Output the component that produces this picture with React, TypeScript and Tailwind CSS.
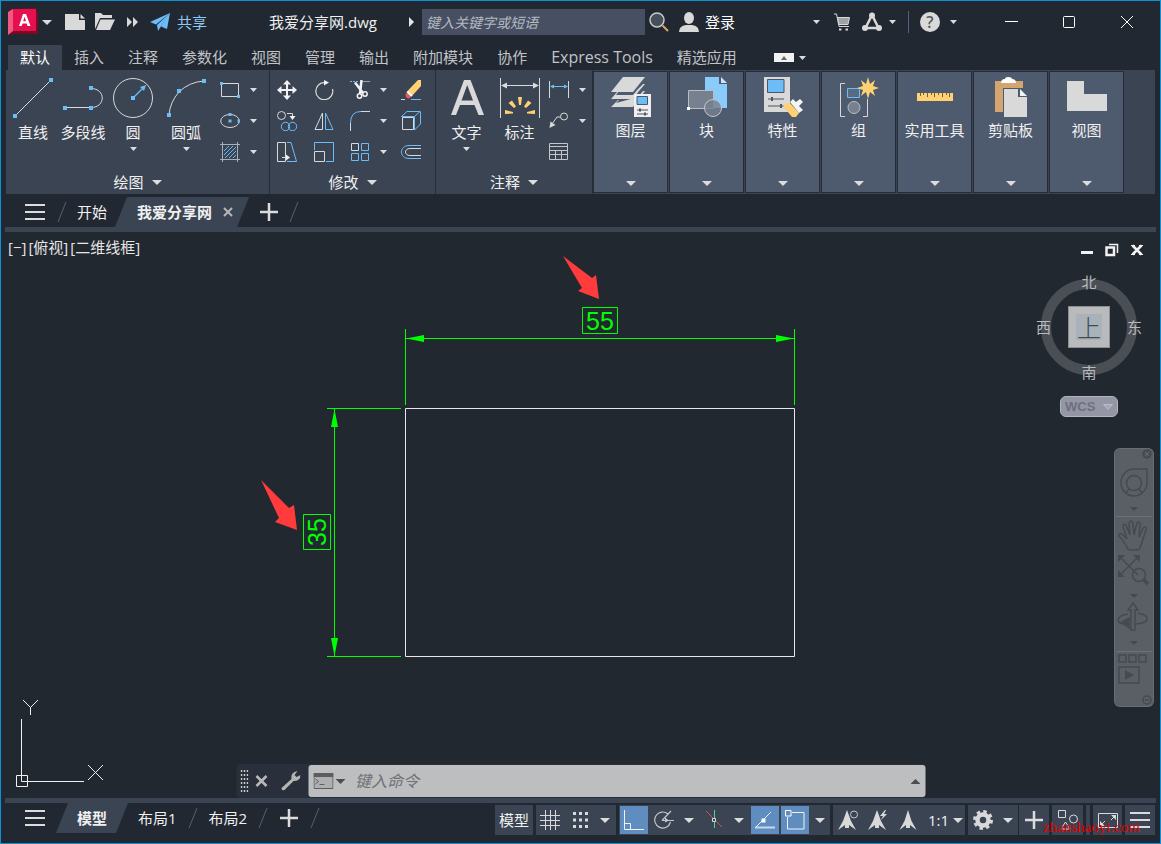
import { useState } from 'react';
import type { ReactNode } from 'react';
import clsx from 'clsx';

interface IconProps {
  children: ReactNode;
  size?: 'sm' | 'lg';
}

interface ToolProps {
  label: string;
  icon: ReactNode;
  caret?: boolean;
}

// Small icons are drawn on a 20px grid, large ones on a 40px grid
function Icon({ children, size = 'sm' }: IconProps) {
  return size === 'lg' ? (
    <svg viewBox="0 0 40 40" className="w-10 h-10 shrink-0" fill="none">{children}</svg>
  ) : (
    <svg viewBox="0 0 20 20" className="w-5 h-5 shrink-0" fill="none">{children}</svg>
  );
}

function Caret({ large = false }: { large?: boolean }) {
  return (
    <svg
      viewBox="0 0 10 5"
      preserveAspectRatio="none"
      className={clsx('shrink-0', large ? 'w-2.5 h-[5px]' : 'w-[7px] h-1')}
    >
      <path d="M0 0H10L5 5Z" fill="#dcdcdc" />
    </svg>
  );
}

function CaretButton({ label, large }: { label: string; large?: boolean }) {
  return (
    <button aria-label={label} className="shrink-0 flex items-center justify-center w-2.5 h-5">
      <Caret large={large} />
    </button>
  );
}

const W = '#d9d9d9';
const B = '#6cbcf7';
const Y = '#ffd173';

const drawTools = [
  {
    label: '直线',
    width: 'w-[50px]',
    icon: (
      <Icon size="lg">
        <path d="M2 38L38 2" stroke={W} />
        <path d="M0 36h4v4H0zM36 0h4v4h-4z" fill={B} />
      </Icon>
    ),
  },
  {
    label: '多段线',
    width: 'w-[50px]',
    icon: (
      <Icon size="lg">
        <path d="M2 29.500H28M28 10.500C43 10.500 43 29.500 28 29.500" stroke={W} />
        <path d="M0 28h4v4H0zM26 28h4v4h-4zM26 8h4v4h-4z" fill={B} />
      </Icon>
    ),
  },
  {
    label: '圆',
    width: 'w-[50px]',
    caret: true,
    icon: (
      <Icon size="lg">
        <circle cx="20" cy="20" r="19.5" stroke={W} />
        <path d="M20 20L31 9" stroke={B} strokeWidth="1.3" />
        <path d="M18 18h4v4h-4zM33 7L27 9L31 13Z" fill={B} />
      </Icon>
    ),
  },
  {
    label: '圆弧',
    width: 'w-14',
    caret: true,
    icon: (
      <Icon size="lg">
        <path d="M3 37Q4 24 13 14Q23 4 38 3" stroke={W} />
        <path d="M1 35h4v4H1zM11 11h4v4h-4zM36 1h4v4h-4z" fill={B} />
      </Icon>
    ),
  },
];

const drawSmall = [
  {
    label: '矩形',
    icon: (
      <Icon>
        <path d="M1.5 3.5H18.5V16.5H1.5Z" stroke={W} />
        <path d="M0 2h3v3H0zM17 15h3v3h-3z" fill={B} />
      </Icon>
    ),
  },
  {
    label: '椭圆',
    icon: (
      <Icon>
        <ellipse cx="10" cy="10" rx="9.3" ry="6.5" stroke={W} />
        <path d="M8.5 8.5h3v3h-3zM8.5 2h3v3h-3zM17.5 8.5h3v3h-3z" fill={B} />
      </Icon>
    ),
  },
  {
    label: '图案填充',
    icon: (
      <Icon>
        <path d="M0 2.500H20M0 17.500H20M2.500 0V20M17.500 0V20" stroke="#a9adb4" />
        <path d="M4 9L9 4M4 13L13 4M5 16L16 5M9 16L16 9M13 16L16 13" stroke={B} />
      </Icon>
    ),
  },
];

const modifyTools: ToolProps[] = [
  {
    label: '移动',
    icon: (
      <Icon>
        <path d="M10 2V18M2 10H18" stroke="#f2f2f2" strokeWidth="2" />
        <path d="M10 0L14 4.500H6ZM10 20L14 15.500H6ZM0 10L4.500 6V14ZM20 10L15.500 6V14Z" fill="#f2f2f2" />
      </Icon>
    ),
  },
  {
    label: '旋转',
    icon: (
      <Icon>
        <path d="M11 2.700A8.500 8.500 0 1 0 18.500 9" stroke={W} strokeWidth="1.200" />
        <path d="M10 0L15 2.500L10 5.500Z" fill="#f2f2f2" />
      </Icon>
    ),
  },
  {
    label: '修剪',
    caret: true,
    icon: (
      <Icon>
        <path d="M0 1.500H8" stroke={B} strokeDasharray="2 1" />
        <path d="M12 1.500H20" stroke="#9aa0a9" />
        <path d="M5 2.500L13 13M11.500 0L10 14" stroke="#f2f2f2" strokeWidth="2.500" />
        <circle cx="9.500" cy="16" r="2.200" stroke="#f2f2f2" strokeWidth="1.500" />
        <circle cx="15" cy="14" r="2.200" stroke="#f2f2f2" strokeWidth="1.500" />
      </Icon>
    ),
  },
  {
    label: '删除',
    icon: (
      <Icon>
        <path d="M20 0V6L11 16L6 11.500L17 0Z" fill={Y} />
        <path d="M7 11L11.500 15.500L10 17L5.500 12.500Z" fill="#fff" />
        <path d="M5.500 13L10 17L8 18.500Q4.500 18.500 4.500 14.500Z" fill="#f0575c" />
        <path d="M0 19.500H4" stroke={W} />
        <path d="M10 19.500H20" stroke={B} />
      </Icon>
    ),
  },
  {
    label: '复制',
    icon: (
      <Icon>
        <circle cx="4.500" cy="4.500" r="4" stroke={W} />
        <path d="M10 2.500H15.500V5" stroke={W} />
        <path d="M12.500 5H18.500L15.500 9Z" fill="#f2f2f2" />
        <circle cx="8.500" cy="15.500" r="4.200" stroke={B} />
        <circle cx="15.500" cy="15.500" r="4.200" stroke={B} />
      </Icon>
    ),
  },
  {
    label: '镜像',
    icon: (
      <Icon>
        <path d="M8.500 2V18.500H1Z" stroke={W} />
        <path d="M11.500 2V18.500H19Z" stroke={B} />
      </Icon>
    ),
  },
  {
    label: '圆角',
    caret: true,
    icon: (
      <Icon>
        <path d="M.5 12Q.5 .5 11 .5" stroke={B} />
        <path d="M.5 12V20M11 .5H20" stroke={W} />
      </Icon>
    ),
  },
  {
    label: '分解',
    icon: (
      <Icon>
        <path d="M.5 5.500L6 .5H19L13.500 5.500ZM19.500 .5V13L13.500 19V5.500" stroke={B} />
        <path d="M1.500 6.500H12.500V18.500H1.500Z" stroke={W} />
      </Icon>
    ),
  },
  {
    label: '拉伸',
    icon: (
      <Icon>
        <path d="M10 .5H14L19.500 19.500H10" stroke={B} />
        <path d="M8.500 .5H.5V19.500H8.500ZM5 15.500H10" stroke={W} />
        <path d="M9 12.500L13 15.500L9 18.500Z" fill="#f2f2f2" />
      </Icon>
    ),
  },
  {
    label: '缩放',
    icon: (
      <Icon>
        <path d="M.5 8V.5H19.500V19.500H12" stroke={B} />
        <path d="M.5 9.500H10.500V19.500H.5Z" stroke={W} />
      </Icon>
    ),
  },
  {
    label: '阵列',
    caret: true,
    icon: (
      <Icon>
        <path d="M1.500 1.500H8.500V8.500H1.500Z" stroke={W} />
        <path d="M11.500 1.500H18.500V8.500H11.500ZM1.500 11.500H8.500V18.500H1.500ZM11.500 11.500H18.500V18.500H11.500Z" stroke={B} />
      </Icon>
    ),
  },
  {
    label: '偏移',
    icon: (
      <Icon>
        <path d="M20 3.500H8C-2 3.500 -2 16.500 8 16.500H20" stroke={B} />
        <path d="M20 6.500H9C3 6.500 3 13.500 9 13.500H20" stroke={W} />
      </Icon>
    ),
  },
];

const annotateSmall: ToolProps[] = [
  {
    label: '线性',
    caret: true,
    icon: (
      <Icon>
        <path d="M.5 1V18M19.500 1V18" stroke={W} />
        <path d="M2 6.500H18" stroke={B} />
        <path d="M1 6.500L5 4.500V8.500ZM19 6.500L15 4.500V8.500Z" fill={B} />
      </Icon>
    ),
  },
  {
    label: '引线',
    caret: true,
    icon: (
      <Icon>
        <circle cx="15" cy="5.500" r="3.500" stroke={W} />
        <path d="M11.500 6H8L3 13" stroke={W} />
        <path d="M.5 17L1.500 10.500L6.500 14Z" fill={W} />
      </Icon>
    ),
  },
  {
    label: '表格',
    icon: (
      <Icon>
        <path d="M.5 1.500H18.500V17.500H.5ZM.5 4.500H18.500M.5 8.500H18.500M.5 12.500H18.500M6.500 8.500V17.500M12.500 8.500V17.500" stroke="#c4c6ca" />
      </Icon>
    ),
  },
];

const tilePanels = [
  {
    label: '图层',
    icon: (
      <Icon size="lg">
        <path d="M12 0H34L22 15H0Z" fill={W} />
        <path d="M27 12L32 7H34L28 14L22 22H0L7 14H8L5 18H22ZM27 20L32 14H34L28 22L22 30H0L7 23H8L5 26" fill={W} />
        <path d="M23 17H40V40H23Z" fill="#efefef" />
        <path d="M26 19.500H36.500V27.500H26Z" fill={B} stroke="#4c5766" />
        <path d="M26 33H37M26 37H37" stroke="#4c5766" />
        <path d="M29 31.500V34.500M34 35.500V38.500" stroke="#4c5766" strokeWidth="2" />
      </Icon>
    ),
  },
  {
    label: '块',
    icon: (
      <Icon size="lg">
        <path d="M18 0H32V7H40V31H18Z" fill="#89cbfb" />
        <path d="M34 0L40 6H34Z" fill="#c7e6fd" />
        <path d="M1.500 13.500H26.500V31.500H1.500Z" fill="#76808f" stroke="#b9bdc4" />
        <circle cx="26" cy="31" r="8.500" fill="#76808f" fillOpacity=".8" stroke="#c5c8cd" />
        <path d="M0 30h3v3H0z" fill="#fff" />
      </Icon>
    ),
  },
  {
    label: '特性',
    icon: (
      <Icon size="lg">
        <path d="M1 0H27V35H1Z" fill={W} />
        <path d="M4.500 2.500H21V15.500H4.500Z" fill={B} stroke="#4c5766" />
        <path d="M5 22H21M5 29H21" stroke="#4c5766" />
        <path d="M9 20V24M18 27V31" stroke="#4c5766" strokeWidth="2" />
        <path d="M20 29L26 25L36 36L33 40H29Z" fill={Y} />
        <path d="M27 25L30 22L33 25L37 22L40 25L36 29L40 33L36 36Z" fill="#f4f4f4" />
      </Icon>
    ),
  },
  {
    label: '组',
    icon: (
      <Icon size="lg">
        <path d="M6 6.500H1.500V39.500H6M24 39.500H28.500V22" stroke={W} />
        <path d="M8.500 11.500H20.500V20.500H8.500Z" stroke={B} fill="#576b82" />
        <circle cx="15" cy="30.500" r="6" stroke="#b9bdc4" fill="#76808f" />
        <path d="M29 0L31 7L36 3L34 9L40 11L34 13L36 19L31 15L29 22L27 15L22 19L24 13L18 11L24 9L22 3L27 7Z" fill={Y} />
      </Icon>
    ),
  },
  {
    label: '实用工具',
    icon: (
      <Icon size="lg">
        <path d="M2 16H38V24H2Z" fill={Y} />
        <path d="M5.500 16V19M8.500 16V18M12.500 16V20M16.500 16V18M19.500 16V20M23.500 16V18M27.500 16V20M31.500 16V18M34.500 16V20" stroke="#6b604a" />
      </Icon>
    ),
  },
  {
    label: '剪贴板',
    icon: (
      <Icon size="lg">
        <path d="M4 4H32V11H12V35H4Z" fill="#d3a66f" />
        <path d="M10 6Q10 2 14 2Q14 0 17 0Q21 0 21 2Q25 2 25 6Z" fill="#fff" />
        <path d="M13 12H27V20H36V40H13Z" fill={W} />
        <path d="M29 12L36 19H29Z" fill="#f2f2f2" />
      </Icon>
    ),
  },
  {
    label: '视图',
    icon: (
      <Icon size="lg">
        <path d="M0 4H17V17H40V34H0Z" fill={W} />
      </Icon>
    ),
  },
];

const ribbonTabs = ['默认', '插入', '注释', '参数化', '视图', '管理', '输出', '附加模块', '协作', 'Express Tools', '精选应用'];

function BigTool({ label, icon, caret, width }: ToolProps & { width: string }) {
  return (
    <button className={clsx('shrink-0 flex flex-col items-center', width)}>
      {icon}
      <span className="mt-1 leading-5 whitespace-nowrap">{label}</span>
      {caret && <span className="mt-[5px]"><Caret /></span>}
    </button>
  );
}

function SmallTool({ label, icon, caret }: ToolProps) {
  return (
    <div className="flex items-center gap-2">
      <button aria-label={label}>{icon}</button>
      {caret && <CaretButton label={`${label}选项`} />}
    </div>
  );
}

function Panel({ title, width, children }: { title: string; width: string; children: ReactNode }) {
  return (
    <section className={clsx('shrink-0 flex flex-col border-r border-[#272d38]', width)}>
      <div className="flex-1 flex pt-2">{children}</div>
      <button className="flex items-center justify-center gap-2 h-6 leading-5">
        {title}
        <Caret large />
      </button>
    </section>
  );
}

function Ribbon() {
  return (
    <div className="flex h-[124px] mx-[5px] bg-[#3b4453] overflow-hidden">
      <Panel title="绘图" width="w-[264px]">
        <div className="flex pl-0.5">
          {drawTools.map((tool) => <BigTool key={tool.label} {...tool} />)}
        </div>
        <div className="flex flex-col gap-[11px] pl-1.5 pt-0.5">
          {drawSmall.map((tool) => <SmallTool key={tool.label} {...tool} caret />)}
        </div>
      </Panel>

      <Panel title="修改" width="w-[166px]">
        <div className="grid grid-cols-[37px_36px_51px_20px] auto-rows-[20px] gap-y-[11px] pl-[7px] pt-0.5">
          {modifyTools.map((tool) => <SmallTool key={tool.label} {...tool} />)}
        </div>
      </Panel>

      <Panel title="注释" width="w-[157px]">
        <div className="flex pl-1">
          <BigTool
            label="文字"
            width="w-[53px]"
            caret
            icon={<Icon size="lg"><path d="M4 37L17 2H23.500L37 37H31.500L27.500 27H13L9 37ZM14.500 22.500H26L20.200 7Z" fill={W} fillRule="evenodd" /></Icon>}
          />
          <BigTool
            label="标注"
            width="w-[53px]"
            icon={
              <Icon size="lg">
                <path d="M.5 0V40M39.500 0V40M2 7.500H38" stroke={W} />
                <path d="M1 7.500L7 4.500V10.500ZM39 7.500L33 4.500V10.500Z" fill={W} />
                <path d="M18 19H22L21 27H19ZM8.500 25L12 22.500L16 28.500L14 30ZM31.500 25L28 22.500L24 28.500L26 30ZM5 32L13 34V35.500L5 36ZM35 32L27 34V35.500L35 36Z" fill={Y} />
              </Icon>
            }
          />
        </div>
        <div className="flex flex-col gap-[11px] pl-[3px] pt-0.5">
          {annotateSmall.map((tool) => <SmallTool key={tool.label} {...tool} />)}
        </div>
      </Panel>

      {/* Collapsed panels */}
      <div className="flex gap-px py-px">
        {tilePanels.map((panel) => (
          <button
            key={panel.label}
            className="shrink-0 flex flex-col items-center w-[75px] pt-[5px] pb-1.5 bg-[#4e5a6d] border border-[#272d38]"
          >
            {panel.icon}
            <span className="mt-[3px] leading-5">{panel.label}</span>
            <span className="mt-auto"><Caret large /></span>
          </button>
        ))}
      </div>
    </div>
  );
}

function TitleBar() {
  return (
    <header className="flex items-center h-11 pl-[7px] pr-1 pb-0.5">
      <button aria-label="应用程序菜单" className="shrink-0">
        <svg viewBox="0 0 30 28" className="w-[30px] h-7">
          <path d="M4 1L28 0L30 6V26H4L0 27V4Z" fill="#7d0a25" />
          <path d="M0 4L5 1V23L0 27Z" fill="#ee5a80" />
          <path d="M5 1H28V23H5Z" fill="#e51050" />
          <path d="M11 18L15 6H18L22.500 18H19.500L18.700 15.500H14.500L13.700 18ZM15.200 13.200H18L16.600 8.800Z" fill="#fff" fillRule="evenodd" />
        </svg>
      </button>
      <span className="ml-1"><CaretButton label="菜单选项" large /></span>
      <button aria-label="新建" className="ml-[13px]">
        <Icon><path d="M0 2H14V8H20V18H0ZM15.500 2L20 6.500H15.500Z" fill={W} /></Icon>
      </button>
      <button aria-label="打开" className="ml-2.5">
        <Icon>
          <path d="M0 17V1H6L8 3H17V6H5L1 15Z" fill={W} />
          <path d="M5.500 7.500H20L15 18H1Z" fill={W} />
        </Icon>
      </button>
      <button aria-label="更多" className="ml-3">
        <svg viewBox="0 0 11 10" className="w-[11px] h-2.5"><path d="M0 0L5 5L0 10ZM6 0L11 5L6 10Z" fill={W} /></svg>
      </button>
      <button className="shrink-0 flex items-center gap-[7px] ml-3 text-[#8cc8f5]">
        <Icon>
          <path d="M20 1L0 10L6 12.500ZM20 1L7 13L8 19L10.500 15ZM20 1L11 14.500L17 17Z" fill={B} />
        </Icon>
        共享
      </button>
      <h1 className="ml-[62px] whitespace-nowrap text-[#f0f0f0]">我爱分享网.dwg</h1>
      <svg viewBox="0 0 5 10" className="w-[5px] h-2.5 ml-8 shrink-0"><path d="M0 0L5 5L0 10Z" fill="#e6e6e6" /></svg>
      <input
        aria-label="搜索"
        placeholder="键入关键字或短语"
        className="w-[223px] h-[26px] ml-2 px-1 bg-[#475062] italic text-sm text-[#e0e0e0] placeholder:text-[#b4b9c1] outline-none"
      />
      <button aria-label="查找" className="ml-1">
        <Icon>
          <circle cx="8" cy="8" r="7" fill="#46505c" stroke="#c9c9c9" strokeWidth="1.500" />
          <path d="M13.500 13.500L19 19" stroke="#d7a76b" strokeWidth="2" />
        </Icon>
      </button>
      <button className="shrink-0 flex items-center gap-1.5 ml-2.5 text-white">
        <Icon>
          <ellipse cx="10" cy="6" rx="5" ry="6" fill={W} />
          <path d="M0 20Q0 14 7 13H13Q20 14 20 20Z" fill={W} />
        </Icon>
        登录
      </button>

      <div className="ml-auto flex items-center">
        <CaretButton label="登录选项" />
        <button aria-label="应用商店" className="ml-3">
          <Icon>
            <path d="M1 2H3.500L6 14.500H16" stroke={W} />
            <path d="M4.500 5.500H16.500L15 12.500H6Z" fill="#a0a2a5" stroke={W} />
            <path d="M6 16.500h2.500v2H6zM12.500 16.500H15v2h-2.500z" fill={W} />
          </Icon>
        </button>
        <button aria-label="保持连接" className="ml-[9px]">
          <Icon>
            <path d="M10 3L3.500 16H16.500Z" stroke={W} strokeWidth="2.500" />
            <circle cx="10" cy="3.500" r="3" fill={W} />
            <circle cx="3" cy="16" r="3" fill={W} />
            <circle cx="17" cy="16" r="3" fill={W} />
          </Icon>
        </button>
        <span className="ml-[5px]"><CaretButton label="连接选项" /></span>
        <span className="w-px h-[22px] mx-[11px] bg-[#566078]" />
        <button aria-label="帮助" className="flex items-center justify-center w-5 h-5 rounded-full bg-[#d9d9d9] text-base font-semibold text-[#555a60]">?</button>
        <span className="ml-2"><CaretButton label="帮助选项" /></span>
        <div className="flex ml-6">
          <button aria-label="最小化" className="flex justify-center w-[58px]">
            <Icon><path d="M4 9.500H17" stroke="#fff" /></Icon>
          </button>
          <button aria-label="最大化" className="flex justify-center w-[58px]">
            <Icon><rect x="4.500" y="4.500" width="11" height="11" rx="1" stroke="#fff" /></Icon>
          </button>
          <button aria-label="关闭" className="flex justify-center w-[58px]">
            <Icon><path d="M4 4L16 16M16 4L4 16" stroke="#fff" /></Icon>
          </button>
        </div>
      </div>
    </header>
  );
}

function Hamburger({ label }: { label: string }) {
  return (
    <button aria-label={label} className="flex flex-col justify-between w-5 h-4">
      <span className="h-0.5 w-full bg-[#dcdcdc]" />
      <span className="h-0.5 w-full bg-[#dcdcdc]" />
      <span className="h-0.5 w-full bg-[#dcdcdc]" />
    </button>
  );
}

function Slash() {
  return (
    <svg viewBox="0 0 10 20" className="w-2.5 h-5 shrink-0"><path d="M1 20L9 0" stroke="#566072" /></svg>
  );
}

function PlusButton({ label }: { label: string }) {
  return (
    <button aria-label={label}>
      <Icon><path d="M10 1V19M1 10H19" stroke="#dcdcdc" strokeWidth="2.500" /></Icon>
    </button>
  );
}

function FileTabs() {
  return (
    <nav className="flex items-center h-[33px] pt-[3px] pl-6 text-[#f0f0f0]">
      <Hamburger label="文件选项卡菜单" />
      <span className="ml-3"><Slash /></span>
      <button className="ml-2.5">开始</button>
      <div className="flex items-center gap-[11px] h-[30px] ml-2 pl-[22px] pr-4 bg-[#3b4453] [clip-path:polygon(12px_0,100%_0,calc(100%_-_12px)_100%,0_100%)]">
        <button className="font-bold">我爱分享网</button>
        <button aria-label="关闭图形">
          <svg viewBox="0 0 10 10" className="w-2.5 h-2.5"><path d="M1 1L9 9M9 1L1 9" stroke="#b4b7bc" strokeWidth="2" /></svg>
        </button>
      </div>
      <span className="flex items-center ml-2.5"><PlusButton label="新图形" /></span>
      <span className="ml-2.5"><Slash /></span>
    </nav>
  );
}

function Drawing() {
  return (
    <svg viewBox="1 232 1159 566" className="absolute inset-0 w-full h-full" fill="none">
      <path d="M405.500 408.500H794.500V656.500H405.500Z" stroke="#e8e8e8" />

      {/* Horizontal dimension */}
      <g stroke="#00ff00">
        <path d="M405.500 329V405M794.500 329V405M406 338.500H794" />
        <path d="M582.500 307.500H617.500V333.500H582.500Z" />
      </g>
      <path d="M406 338.500L424 335V342ZM794 338.500L776 335V342Z" fill="#00ff00" />
      <text x="600" y="330" fontSize="25" textAnchor="middle" fill="#00ff00" className="font-['Liberation_Sans',sans-serif]">55</text>

      {/* Vertical dimension */}
      <g stroke="#00ff00">
        <path d="M327 408.500H401M327 656.500H401M334.500 409V656" />
        <path d="M303.500 514.500H330.500V549.500H303.500Z" />
      </g>
      <path d="M334.500 409L331 427H338ZM334.500 656L331 638H338Z" fill="#00ff00" />
      <text transform="translate(326 532) rotate(-90)" fontSize="25" textAnchor="middle" fill="#00ff00" className="font-['Liberation_Sans',sans-serif]">35</text>

      {/* Callout arrows */}
      <path d="M563 256L592 278L596 275L599 299L578 291L582 288Z" fill="#ff3b3b" />
      <path d="M261 480L289 508L294 505L297 530L275 522L279 518Z" fill="#ff3b3b" />

      {/* UCS icon */}
      <g stroke="#f0f0f0">
        <path d="M21.500 719V781.500H84M16.500 775.500H27.500V786.500H16.500Z" />
        <path d="M23 700L30.500 707.500L38 700M30.500 707.500V715M88 765L103 780M103 765L88 780" />
      </g>
    </svg>
  );
}

function ViewCube() {
  return (
    <div className="absolute top-10 right-[18px] w-[106px] flex flex-col items-center font-['Noto_Sans_CJK_SC',sans-serif] text-[#b8babd]">
      <div className="relative w-full h-[110px] flex items-center justify-center">
        <div className="w-24 h-24 rounded-full border-[10px] border-[#4a4e55] flex items-center justify-center">
          <button className="w-[42px] h-[42px] p-[7px] bg-[#b9babc] border border-[#8b8f93]">
            <span className="flex items-center justify-center w-[26px] h-[26px] bg-[#a9b2b9] text-2xl leading-6 font-light text-[#414951]">上</span>
          </button>
        </div>
        <span className="absolute top-0 left-1/2 -translate-x-1/2 leading-5">北</span>
        <span className="absolute bottom-0 left-1/2 -translate-x-1/2 leading-5">南</span>
        <span className="absolute left-0 top-1/2 -translate-y-1/2 leading-5">西</span>
        <span className="absolute right-0 top-1/2 -translate-y-1/2 leading-5">东</span>
      </div>
      <button className="flex items-center justify-between w-[58px] h-[21px] mt-[14px] px-1 rounded-md bg-[#9496a5] border border-[#b3b4c0] font-['Liberation_Sans',sans-serif] text-[13px] font-bold text-[#6d7080]">
        WCS
        <svg viewBox="0 0 10 6" className="w-2.5 h-1.5"><path d="M.5 .5H9.500L5 5.500Z" fill="#a6a8b5" stroke="#bcbdc8" /></svg>
      </button>
    </div>
  );
}

function NavBar() {
  return (
    <div className="absolute top-[216px] right-1.5 w-10 h-[259px] rounded-md bg-[#5a5f66] overflow-hidden">
      <svg viewBox="0 0 40 259" className="w-full h-full" fill="none" stroke="#454a51" strokeWidth="1.500">
        <rect x=".5" y=".5" width="39" height="258" rx="5" stroke="#686d73" strokeWidth="1" />
        <circle cx="33" cy="6" r="4" fill="#4a4f55" />
        <path d="M31 4L35 8M35 4L31 8" stroke="#666b71" strokeWidth="1" />
        <path d="M20 21H33V35A13 13.500 0 1 1 20 21Z" />
        <circle cx="20" cy="35" r="7.500" />
        <path d="M12 45L15 41M28 45L25 41" />
        <path d="M2 68.500H38M2 203.500H38" stroke="#6c7176" strokeWidth="1" />
        <path d="M16 59H24L20 63ZM16 146H24L20 150ZM16 193H24L20 197Z" fill="#454a51" stroke="none" />
        <path d="M14 101Q9 92 5 88Q5 84 9 87L13 91L9 79Q9 75 12 77L16 87L15 75Q17 71 19 75L20 87L23 75Q26 72 26 77L25 89L29 80Q33 77 32 82L28 94Q26 101 24 102H16Z" />
        <path d="M6 109L24 127M24 109L6 127" />
        <path d="M4 107H11L4 114ZM26 107H19L26 114ZM4 129H11L4 122Z" fill="#454a51" stroke="none" />
        <circle cx="25" cy="127" r="6.500" />
        <path d="M29 131L34 136" strokeWidth="3.500" />
        <path d="M17 182V162H14L19 155L24 162H21V182Z" />
        <path d="M14 166C1 168 2 175 10 176M24 165C38 168 36 175 21 176" />
        <path d="M8 174L15 170V180Z" fill="#454a51" />
        <path d="M5 207H12V214H5ZM15 207H22V214H15ZM25 207H32V214H25ZM5 219H25V235H5Z" />
        <path d="M11 222L20 227L11 232Z" fill="#454a51" stroke="none" />
        <circle cx="33" cy="252" r="4" />
        <path d="M31 252H35" />
      </svg>
    </div>
  );
}

function CommandLine() {
  const [command, setCommand] = useState('');

  return (
    <div className="absolute bottom-0 left-1/2 -translate-x-1/2 w-[689px] max-w-full h-[34px] flex items-center rounded-sm bg-[#2a2f3c]">
      <svg viewBox="0 0 8 22" className="w-2 h-[22px] ml-1">
        <path d="M1 0V22M4 0V22M7 0V22" stroke="#c9c9c9" strokeWidth="1.500" strokeDasharray="2 2" />
      </svg>
      <button aria-label="关闭命令行" className="ml-1.5">
        <svg viewBox="0 0 14 14" className="w-3.5 h-3.5"><path d="M2 2L12 12M12 2L2 12" stroke="#b9b9b9" strokeWidth="2.500" /></svg>
      </button>
      <button aria-label="自定义" className="ml-3">
        <Icon>
          <path d="M1 17L11 8Q10 3 14 1L17 0L14 4L16 6L20 4Q20 10 13 10L4 19Q1 20 1 17Z" fill="#b4b4b4" />
        </Icon>
      </button>
      <div className="flex-1 flex items-center h-8 ml-2 px-[5px] rounded-[3px] bg-[#bdbec0]">
        <button aria-label="最近使用的命令" className="flex items-center gap-0.5">
          <svg viewBox="0 0 20 16" className="w-5 h-4" fill="none">
            <path d="M.5 .5H19.500V15.500H.5Z" fill="#adafb1" stroke="#5b5d60" />
            <path d="M0 0H20V4H0Z" fill="#5b5d60" />
            <path d="M2 6L5 8.500L2 11M6 11.500H11" stroke="#5b5d60" />
          </svg>
          <svg viewBox="0 0 10 5" className="w-2.5 h-[5px]"><path d="M0 0H10L5 5Z" fill="#4c4d50" /></svg>
        </button>
        <input
          aria-label="命令"
          placeholder="键入命令"
          value={command}
          onChange={(e) => setCommand(e.target.value)}
          className="flex-1 ml-2.5 bg-transparent italic text-base text-[#333] placeholder:text-[#707276] outline-none"
        />
        <button aria-label="命令历史">
          <svg viewBox="0 0 10 5" className="w-2.5 h-[5px]"><path d="M0 5H10L5 0Z" fill="#4c4d50" /></svg>
        </button>
      </div>
    </div>
  );
}

function Canvas() {
  return (
    <main className="relative flex-1 min-h-[480px] bg-[#222830]">
      <Drawing />
      <div className="absolute top-[3px] left-[7px] flex gap-0.5 leading-6 text-[#e6e6e6]">
        <button>[−]</button>
        <button>[俯视]</button>
        <button>[二维线框]</button>
      </div>
      <div className="absolute top-2 right-[13px] flex gap-[5px]">
        <button aria-label="最小化视口">
          <Icon><path d="M4 11H16V14H4Z" fill="#f2f2f2" /></Icon>
        </button>
        <button aria-label="还原视口">
          <Icon>
            <path d="M4.500 7.500H12V15H4.500Z" stroke="#f2f2f2" strokeWidth="2.500" />
            <path d="M7 4.500H15.500V13" stroke="#f2f2f2" strokeWidth="1.500" />
          </Icon>
        </button>
        <button aria-label="关闭视口">
          <Icon>
            <path d="M5.500 5.500L14.500 14.500M14.500 5.500L5.500 14.500" stroke="#f2f2f2" strokeWidth="2.500" />
            <path d="M4 5.500H8M12 5.500H16M4 14.500H8M12 14.500H16" stroke="#f2f2f2" />
          </Icon>
        </button>
      </div>
      <ViewCube />
      <NavBar />
      <CommandLine />
    </main>
  );
}

function Segment({ children, className }: { children?: ReactNode; className?: string }) {
  return <div className={clsx('shrink-0 flex items-center h-[30px] bg-[#3b4453]', className)}>{children}</div>;
}

function ToggleButton({ label, on, children }: { label: string; on: boolean; children: ReactNode }) {
  const [active, setActive] = useState(on);

  return (
    <button
      aria-label={label}
      aria-pressed={active}
      onClick={() => setActive(!active)}
      className={clsx('flex items-center justify-center w-7 h-7', active && 'bg-[#5f8dc0]')}
    >
      {children}
    </button>
  );
}

function StatusBar() {
  return (
    <footer className="relative flex items-start justify-between h-10 pl-6 pr-[5px] text-[#f0f0f0]">
      <div className="flex items-center h-[30px]">
        <Hamburger label="布局菜单" />
        <button className="h-full ml-[11px] px-[21px] bg-[#3b4453] font-bold [clip-path:polygon(12px_0,100%_0,calc(100%_-_12px)_100%,0_100%)]">模型</button>
        <button className="ml-2.5">布局1</button>
        <span className="ml-[11px]"><Slash /></span>
        <button className="ml-[11px]">布局2</button>
        <span className="ml-[11px]"><Slash /></span>
        <span className="flex ml-[11px]"><PlusButton label="新建布局" /></span>
        <span className="ml-[11px]"><Slash /></span>
      </div>

      <div className="flex gap-[3px] mt-0.5">
        <Segment className="w-[38px] justify-center"><button>模型</button></Segment>

        <Segment className="w-20 pl-1">
          <button aria-label="栅格">
            <Icon><path d="M5.500 0V20M10.500 0V20M15.500 0V20M0 5.500H20M0 10.500H20M0 15.500H20" stroke={W} /></Icon>
          </button>
          <button aria-label="捕捉" className="ml-2.5">
            <Icon>
              <path d="M4.500 2V18M10.500 2V18M16.500 2V18" stroke={W} strokeWidth="3" strokeDasharray="3 3.500" />
            </Icon>
          </button>
          <span className="ml-2.5"><CaretButton label="捕捉选项" large /></span>
        </Segment>

        <Segment className="w-[211px] pl-px">
          <ToggleButton label="正交" on>
            <Icon><path d="M.5 0V19.500H20M.5 13.500H6.500V19.500" stroke="#f2f2f2" /></Icon>
          </ToggleButton>
          <button aria-label="极轴追踪" className="ml-1.5">
            <Icon>
              <path d="M14 4A8 8 0 1 0 16.500 12M8 10.500L17 1M8 10.500H20" stroke="#c4c6ca" strokeWidth="1.200" />
              <path d="M11 7.500L15 10.500L11 12.500Z" fill="#c4c6ca" />
            </Icon>
          </button>
          <span className="ml-2.5"><CaretButton label="极轴选项" large /></span>
          <button aria-label="等轴测草图" className="ml-2.5">
            <Icon>
              <path d="M10.500 0V8M10.500 11V18" stroke="#5fcf87" />
              <path d="M2 1L9 8M11 10L18 17" stroke="#c8555d" />
              <path d="M8.500 8.500H11.500V11.500H8.500Z" stroke={W} />
            </Icon>
          </button>
          <span className="ml-2.5"><CaretButton label="等轴测选项" large /></span>
          <span className="ml-[7px]">
            <ToggleButton label="对象捕捉追踪" on>
              <Icon>
                <path d="M1 17L16 2" stroke="#f2f2f2" />
                <path d="M0 17.500H20" stroke="#c9d8e8" strokeWidth="2" />
                <path d="M6.500 8.500h4v4h-4z" fill="#fff" />
              </Icon>
            </ToggleButton>
          </span>
          <span className="ml-0.5">
            <ToggleButton label="对象捕捉" on>
              <Icon>
                <path d="M7 2.500H19V19H2.500V7" stroke="#f2f2f2" />
                <path d="M.5 .5H6V6H.5Z" stroke="#fff" />
              </Icon>
            </ToggleButton>
          </span>
          <span className="ml-1.5"><CaretButton label="对象捕捉选项" large /></span>
        </Segment>

        <Segment className="w-[132px] pl-[5px] gap-2.5">
          <button aria-label="注释可见性">
            <Icon>
              <path d="M9 0L13 11L18 20L11 15V18H7V15L0 20L5 11Z" fill={W} />
              <circle cx="16" cy="4.500" r="3.500" stroke="#c4c6ca" />
            </Icon>
          </button>
          <button aria-label="自动缩放">
            <Icon>
              <path d="M9 0L13 11L18 20L11 15V18H7V15L0 20L5 11Z" fill={W} />
              <path d="M17 0L12 6H15L13 10L19 4H16L18 0Z" fill={W} />
            </Icon>
          </button>
          <button aria-label="注释比例">
            <Icon><path d="M10 0L13.500 11L18.500 20L12 15V18H8V15L1.500 20L6.500 11Z" fill={W} /></Icon>
          </button>
          <button className="flex items-center gap-1">1:1<Caret large /></button>
        </Segment>

        <Segment className="w-[81px] pl-[5px]">
          <button aria-label="切换工作空间">
            <Icon>
              <circle cx="10" cy="10" r="5.500" stroke={W} strokeWidth="4.500" />
              <circle cx="10" cy="10" r="8.500" stroke={W} strokeWidth="3" strokeDasharray="3.400 3.280" />
            </Icon>
          </button>
          <span className="ml-2.5"><CaretButton label="工作空间选项" large /></span>
          <span className="w-px h-full ml-[5px] bg-[#222830]" />
          <span className="flex ml-[5px]"><PlusButton label="注释监视器" /></span>
        </Segment>

        <Segment className="w-[31px] justify-center">
          <button aria-label="隔离对象">
            <Icon>
              <path d="M.5 .5H7.500V7.500H.5ZM7.500 12L12 19H3Z" stroke={W} />
              <circle cx="15.500" cy="9" r="4" stroke={W} />
            </Icon>
          </button>
        </Segment>
        <Segment className="w-1" />
        <Segment className="w-[29px] justify-center">
          <button aria-label="全屏显示">
            <Icon>
              <path d="M.5 3.500H19.500V17.500H.5Z" stroke={W} />
              <path d="M13 5H18V10ZM2 11V16H7Z" fill={W} />
              <path d="M13 10L16 7M4 14L7 11" stroke={W} />
            </Icon>
          </button>
        </Segment>
        <Segment className="w-[30px] justify-center"><Hamburger label="自定义状态栏" /></Segment>
      </div>

      <span className="absolute right-5 top-3.5 pointer-events-none leading-5 font-['Liberation_Serif',serif] text-[#e00000]">zhanshaoyi.com</span>
    </footer>
  );
}

export default function App() {
  const [activeTab, setActiveTab] = useState('默认');

  return (
    <div className="min-h-screen flex flex-col overflow-hidden border border-[#0b93d6] bg-[#222831] text-[15px] text-[#f0f0f0] font-['Open_Sans','Noto_Sans_CJK_SC',sans-serif]">
      <TitleBar />

      {/* Ribbon tabs */}
      <div className="flex items-center h-[25px] pl-[7px] text-[#c0c3c8]">
        {ribbonTabs.map((tab) => (
          <button
            key={tab}
            onClick={() => setActiveTab(tab)}
            className={clsx(
              'shrink-0 h-full px-3 pb-0.5 leading-5 whitespace-nowrap',
              tab === 'Express Tools' && 'text-base leading-5',
              activeTab === tab && 'bg-[#3b4453] text-white'
            )}
          >
            {tab}
          </button>
        ))}
        <button aria-label="最小化功能区" className="flex items-center justify-center w-5 h-[9px] ml-[25px] bg-[#f2f2f2]">
          <svg viewBox="0 0 6 4" className="w-1.5 h-1"><path d="M0 4H6L3 0Z" fill="#666" /></svg>
        </button>
        <span className="ml-1"><CaretButton label="功能区选项" /></span>
      </div>

      <Ribbon />
      <FileTabs />
      <div className="h-[5px] mx-1 bg-[#3b4453]" />
      <Canvas />
      <div className="h-[5px] mx-1 bg-[#3b4453]" />
      <StatusBar />
    </div>
  );
}
